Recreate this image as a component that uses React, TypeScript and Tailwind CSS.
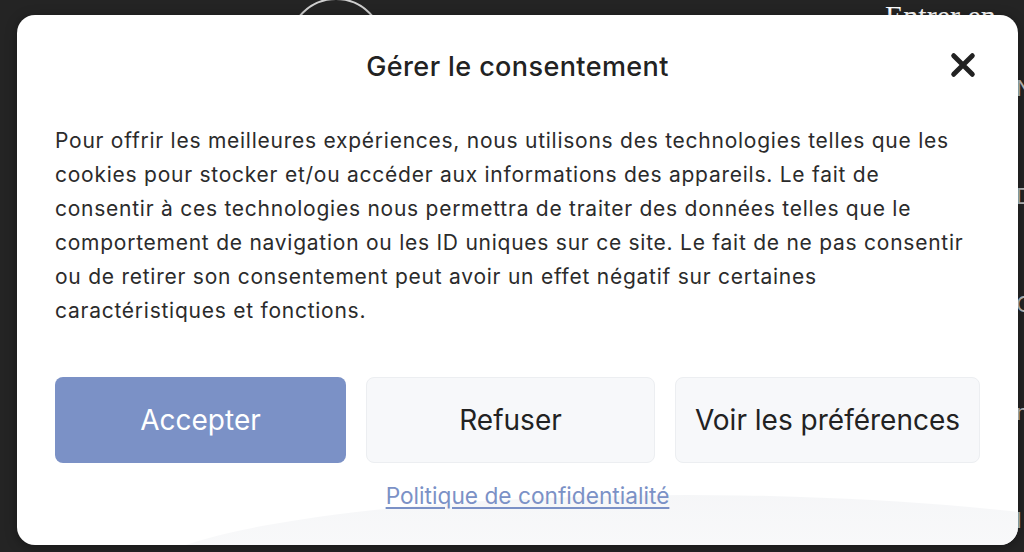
import React from 'react';

const sideLetters = ['N', 'D', 'C', 'n', 'I'];

const App: React.FC = () => {
  return (
    <div className="relative h-[552px] w-[1024px] overflow-hidden bg-[#242424] font-['Inter','Noto_Sans',sans-serif]">
      {/* Page behind the dialog */}
      <div className="pointer-events-none absolute inset-0">
        <div className="absolute left-[288px] top-[-2px] h-[96px] w-[96px] rounded-full border-2 border-[#cfcfcf]" />
        <div className="absolute left-[885px] top-[-7px] whitespace-nowrap font-['Liberation_Serif',serif] text-[30px] text-white">
          Entrer en
        </div>
        <div className="absolute left-[1016px] top-[76px] flex flex-col gap-[84px] text-[22px] leading-[24px] text-[#bbbbbb]">
          {sideLetters.map((l) => (
            <span key={l}>{l}</span>
          ))}
        </div>
      </div>

      {/* Consent dialog */}
      <div className="relative pl-[17px] pt-[15px]">
        <div className="relative flex h-[530px] w-[1001px] flex-col overflow-hidden rounded-[18px] bg-white px-[38px] shadow-[0_2px_12px_rgba(0,0,0,0.35)]">
          <div className="pointer-events-none absolute bottom-[-120px] left-[120px] h-[170px] w-[1100px] rounded-[50%] bg-gradient-to-b from-[#f3f4f6] to-white opacity-80" />

          <div className="relative flex h-[104px] items-center justify-center">
            <h2 className="text-[27px] font-medium tracking-[0.4px] text-[#222222]">Gérer le consentement</h2>
            <button className="absolute right-[3px] top-[36px] flex h-[28px] w-[28px] items-center justify-center text-[#222222]">
              <svg viewBox="0 0 24 24" className="h-[28px] w-[28px]" fill="none" stroke="currentColor" strokeWidth="4.2" strokeLinecap="round">
                <path d="M4 4 L20 20 M20 4 L4 20" />
              </svg>
            </button>
          </div>

          <p className="relative pt-[5px] text-[21px] leading-[34px] tracking-[0.75px] text-[#2b2b2b]">
            Pour offrir les meilleures expériences, nous utilisons des technologies telles que les cookies pour stocker
            et/ou accéder aux informations des appareils. Le fait de consentir à ces technologies nous permettra de
            traiter des données telles que le comportement de navigation ou les ID uniques sur ce site. Le fait de ne
            pas consentir ou de retirer son consentement peut avoir un effet négatif sur certaines caractéristiques et
            fonctions.
          </p>

          <div className="relative mt-[49px] flex gap-[20px]">
            <button className="h-[86px] w-[291px] rounded-[8px] bg-[#7b91c6] text-[28px] text-white">Accepter</button>
            <button className="h-[86px] w-[289px] rounded-[8px] border border-[#eceef1] bg-[#f7f8fa] text-[28px] text-[#222222]">
              Refuser
            </button>
            <button className="h-[86px] flex-1 rounded-[8px] border border-[#eceef1] bg-[#f7f8fa] text-[28px] text-[#222222]">
              Voir les préférences
            </button>
          </div>

          <div className="relative mt-[16px] flex justify-center pl-[20px]">
            <a href="#" className="text-[22.7px] text-[#7b91c6] underline underline-offset-[3px]">
              Politique de confidentialité
            </a>
          </div>
        </div>
      </div>
    </div>
  );
};

export default App;
